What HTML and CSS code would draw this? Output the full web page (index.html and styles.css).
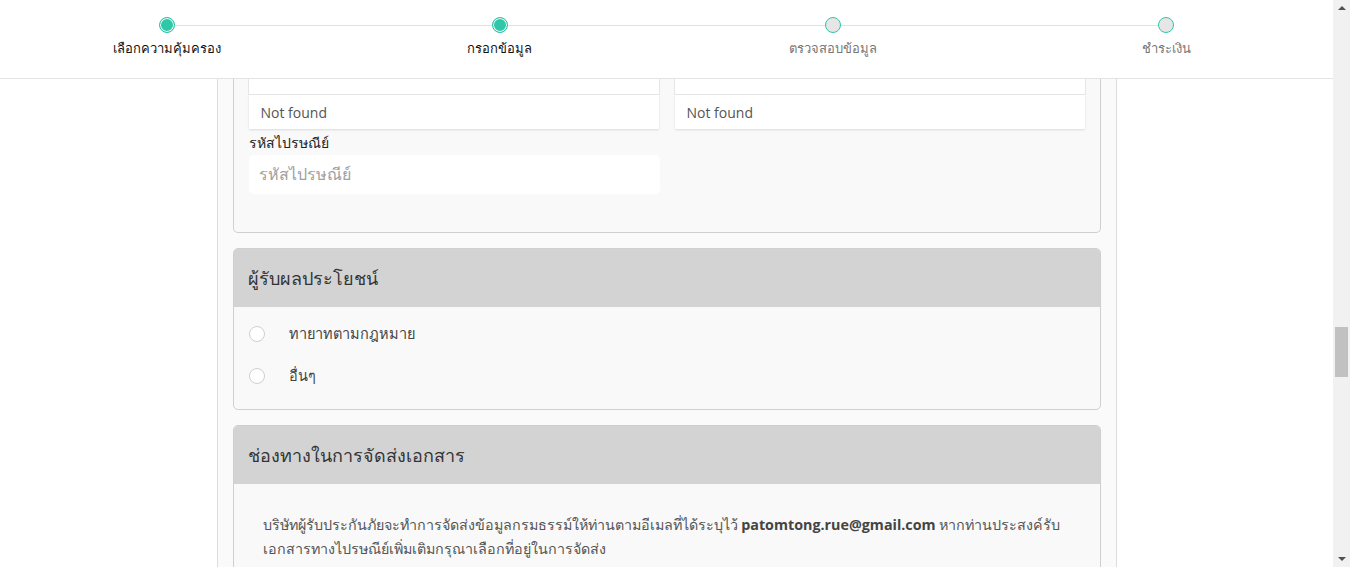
FILE: index.html
```html
<!DOCTYPE html>
<html lang="th">
<head>
<meta charset="utf-8">
<title>กรอกข้อมูล</title>
<link rel="stylesheet" href="styles.css">
</head>
<body>
<div class="window">
  <div class="main">
    <header class="stepper">
      <div class="step done">
        <div class="track"><span class="line blank"></span><span class="dot"></span><span class="line"></span></div>
        <div class="label">เลือกความคุ้มครอง</div>
      </div>
      <div class="step done">
        <div class="track"><span class="line"></span><span class="dot"></span><span class="line"></span></div>
        <div class="label">กรอกข้อมูล</div>
      </div>
      <div class="step">
        <div class="track"><span class="line"></span><span class="dot"></span><span class="line"></span></div>
        <div class="label">ตรวจสอบข้อมูล</div>
      </div>
      <div class="step">
        <div class="track"><span class="line"></span><span class="dot"></span><span class="line blank"></span></div>
        <div class="label">ชำระเงิน</div>
      </div>
    </header>

    <div class="content">
      <div class="container">
        <section class="card card-cut">
          <div class="card-body address">
            <div class="row">
              <div class="col">
                <div class="select-tail"></div>
                <div class="dropdown">Not found</div>
              </div>
              <div class="col">
                <div class="select-tail"></div>
                <div class="dropdown">Not found</div>
              </div>
            </div>
            <div class="row">
              <div class="col">
                <label class="field-label">รหัสไปรษณีย์</label>
                <div class="input">รหัสไปรษณีย์</div>
              </div>
              <div class="col"></div>
            </div>
          </div>
        </section>

        <section class="card">
          <div class="card-head">ผู้รับผลประโยชน์</div>
          <div class="card-body radios">
            <div class="radio"><span class="circle"></span><span>ทายาทตามกฎหมาย</span></div>
            <div class="radio"><span class="circle"></span><span>อื่นๆ</span></div>
          </div>
        </section>

        <section class="card">
          <div class="card-head">ช่องทางในการจัดส่งเอกสาร</div>
          <div class="card-body notice">
            <p>บริษัทผู้รับประกันภัยจะทำการจัดส่งข้อมูลกรมธรรม์ให้ท่านตามอีเมลที่ได้ระบุไว้ <b>patomtong.rue@gmail.com</b> หากท่านประสงค์รับเอกสารทางไปรษณีย์เพิ่มเติมกรุณาเลือกที่อยู่ในการจัดส่ง</p>
          </div>
        </section>
      </div>
    </div>
  </div>
  <div class="scrollbar">
    <span class="arrow up"></span>
    <div class="sb-track"><span class="thumb"></span></div>
    <span class="arrow down"></span>
  </div>
</div>
</body>
</html>
```
FILE: styles.css
```css
* { box-sizing: border-box; }
html, body { margin: 0; padding: 0; height: 100%; overflow: hidden; }
body {
  font-family: "Open Sans", "Noto Sans", "DejaVu Sans", sans-serif;
  color: #333;
  background: #fff;
}
.window { display: flex; height: 567px; width: 1350px; }
.main { width: 1333px; display: flex; flex-direction: column; overflow: hidden; }

/* stepper */
.stepper {
  height: 79px;
  flex: none;
  display: grid;
  grid-template-columns: repeat(4, 1fr);
  border-bottom: 1px solid #e3e3e3;
  background: #fff;
  padding-top: 17px;
}
.step { display: flex; flex-direction: column; align-items: center; }
.track { display: flex; align-items: center; width: 100%; height: 16px; }
.line { flex: 1; height: 1px; background: #e2e2e2; }
.line.blank { background: transparent; }
.dot {
  width: 16px; height: 16px; border-radius: 50%;
  border: 1px solid #2ec7a7;
  background: #e6e6e6;
  flex: none;
}
.step.done .dot { background: #2ec7a7; box-shadow: inset 0 0 0 1px #fff; }
.label {
  margin-top: 5px;
  font-size: 13px;
  line-height: 20px;
  color: #777;
}
.step.done .label { color: #111; }

/* content */
.content { flex: 1; overflow: hidden; }
.container {
  width: 900px;
  margin: 0 auto;
  min-height: 100%;
  background: #fafafa;
  border-left: 1px solid #dcdcdc;
  border-right: 1px solid #dcdcdc;
  padding: 0 15px;
}
.card {
  background: #f9f9f9;
  border: 1px solid #cfcfcf;
  border-radius: 5px;
  margin-bottom: 15px;
  overflow: hidden;
}
.card-cut { border-top: none; border-top-left-radius: 0; border-top-right-radius: 0; }
.card-head {
  background: #d3d3d3;
  height: 58px;
  display: flex;
  align-items: center;
  padding-left: 14px;
  font-size: 18px;
  color: #333;
}

.address { padding: 0 14px 38px; }
.row { display: flex; gap: 14px; }
.col { flex: 1; }
.select-tail {
  height: 16px;
  background: #fff;
  border: 1px solid #e6e6e6;
  border-top: none;
}
.dropdown {
  height: 34px;
  margin: 0 1px;
  background: #fff;
  box-shadow: 0 1px 2px rgba(0,0,0,0.12);
  display: flex;
  align-items: center;
  padding-left: 12px;
  font-size: 14px;
  font-weight: 500;
  color: #555;
}
.field-label {
  display: block;
  margin: 4px 0 0 1px;
  font-size: 14px;
  line-height: 20px;
  color: #222;
}
.input {
  height: 39px;
  margin: 2px 0 0 1px;
  background: #fff;
  border-radius: 5px;
  display: flex;
  align-items: center;
  padding-left: 10px;
  font-size: 16px;
  color: #a0a0a0;
}

.radios { padding: 13px 15px 20px; }
.radio {
  display: flex;
  align-items: center;
  height: 27px;
  margin-bottom: 15px;
  font-size: 14.5px;
  color: #444;
}
.radio:last-child { margin-bottom: 0; }
.circle {
  width: 16px; height: 16px; border-radius: 50%;
  border: 1px solid #cfcfcf;
  background: #fff;
  margin-right: 24px;
  flex: none;
}

.notice { padding: 29px 29px 20px; }
.notice p {
  margin: 0;
  font-size: 14.3px;
  line-height: 24px;
  color: #555;
}
.notice b { font-weight: 700; color: #444; }

/* fake scrollbar */
.scrollbar {
  width: 17px;
  background: #f1f1f1;
  display: flex;
  flex-direction: column;
  align-items: center;
}
.arrow { width: 0; height: 0; border-left: 4px solid transparent; border-right: 4px solid transparent; margin: 6px 0; flex: none; }
.arrow.up { border-bottom: 4px solid #505050; }
.arrow.down { border-top: 4px solid #505050; }
.sb-track { flex: 1; width: 100%; display: flex; flex-direction: column; padding-top: 311px; align-items: center; }
.thumb { width: 13px; height: 50px; background: #c1c1c1; }
```
